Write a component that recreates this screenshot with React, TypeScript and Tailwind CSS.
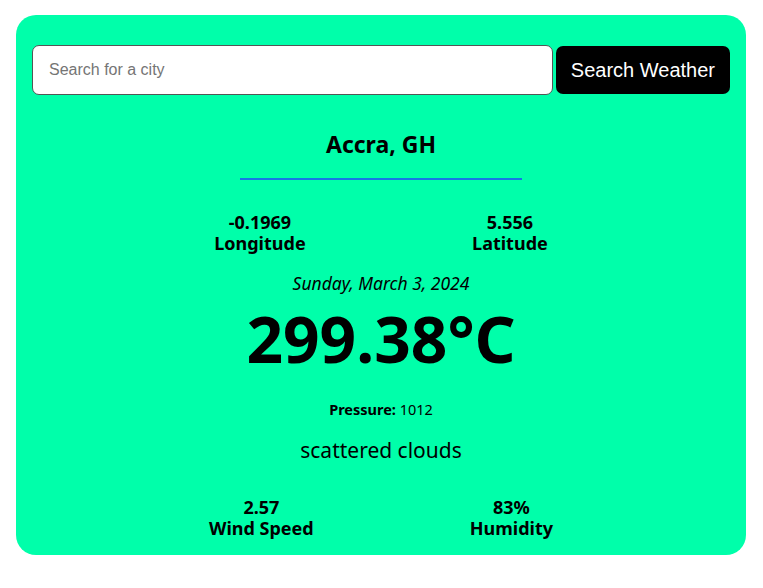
const font = {fontFamily: '"Noto Sans", "Open Sans", sans-serif'}

type StatProps = {
  value: string
  label: string
}

const Stat = ({value, label}: StatProps) => {
  return (
    <div className="text-center font-bold text-[18px] leading-[21px] text-black">
      <p>{value}</p>
      <p>{label}</p>
    </div>
  )
}

const App = () => {
  return (
    <div className="min-h-screen bg-white pt-[15px] pl-4">
      <main
        className="w-[730px] rounded-[20px] bg-[#00ffaa] px-4 pt-[30px] pb-4"
        style={font}
      >
        <form className="flex items-center gap-[3px]" onSubmit={(e) => e.preventDefault()}>
          <input
            type="text"
            placeholder="Search for a city"
            className="h-[50px] flex-1 rounded-[7px] border border-[#555] bg-white px-4 text-base text-black placeholder:text-[#757575] outline-none font-['Liberation_Sans',Arial,sans-serif]"
          />
          <button
            type="submit"
            className="h-12 rounded-[7px] bg-black px-[15px] text-xl text-white font-['Liberation_Sans',Arial,sans-serif]"
          >
            Search Weather
          </button>
        </form>

        <h2 className="mt-[33px] text-center text-[23px] leading-[32px] font-bold text-black">Accra, GH</h2>
        <div className="mx-auto mt-[18px] h-[2px] w-[282px] bg-[#1677e6]" />

        <div className="mx-auto mt-[32px] flex w-[500px] justify-around">
          <Stat value="-0.1969" label="Longitude" />
          <Stat value="5.556" label="Latitude" />
        </div>

        <p className="mt-[17px] text-center text-[17.5px] leading-6 italic text-black">Sunday, March 3, 2024</p>
        <h1 className="mt-[12px] text-center text-[64px] leading-[64px] font-bold text-black">299.38°C</h1>

        <p className="mt-[28px] text-center text-[14.5px] leading-5 text-black">
          <span className="font-bold">Pressure:</span> 1012
        </p>
        <p className="mt-[17px] text-center text-[21px] leading-7 text-black">scattered clouds</p>

        <div className="mx-auto mt-[33px] flex w-[500px] justify-around">
          <Stat value="2.57" label="Wind Speed" />
          <Stat value="83%" label="Humidity" />
        </div>
      </main>
    </div>
  )
}

export default App
